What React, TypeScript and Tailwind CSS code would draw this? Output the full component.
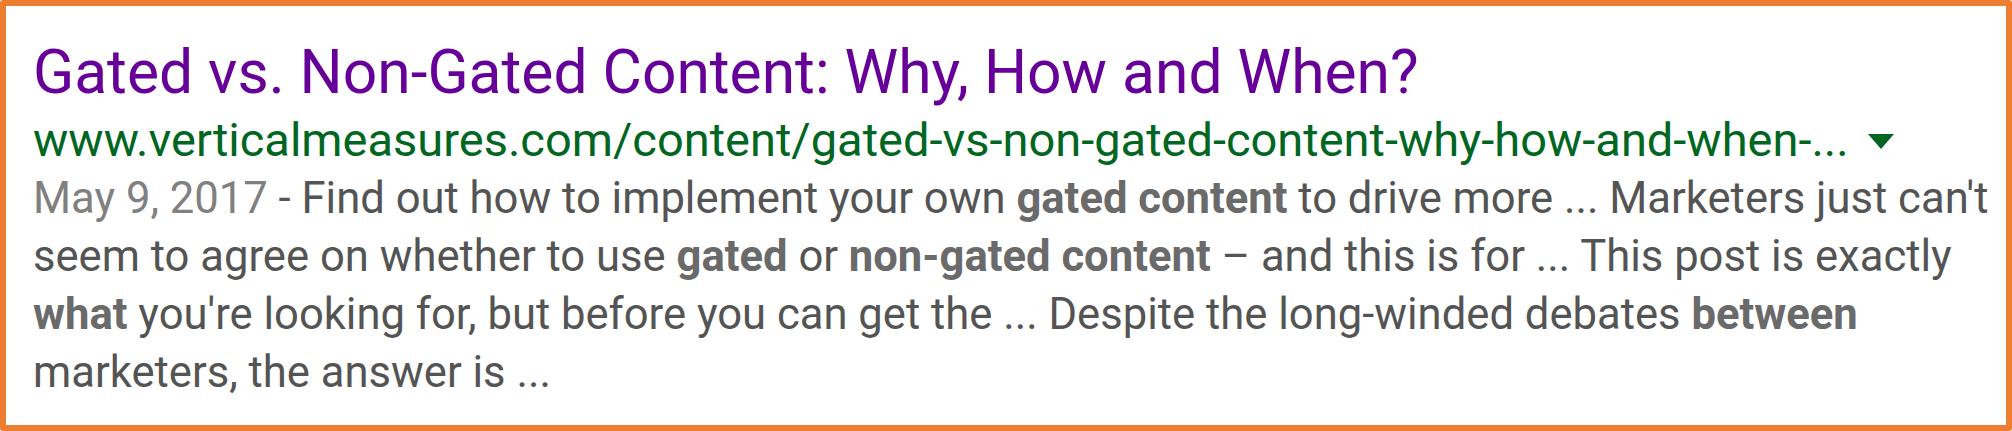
import React from 'react';

const B = ({ children }: { children: React.ReactNode }) => (
    <b className="font-bold text-[#6a6a6a]">{children}</b>
);

export default function App() {
    return (
        <div className="w-[2012px] h-[431px] bg-white border-[6px] border-[#ed7d31] rounded-[3px] pl-[27px] pt-[30px] font-['Roboto',sans-serif] overflow-hidden">
            {/* title */}
            <div className="text-[60.5px] leading-[74px] text-[#660099] whitespace-nowrap">
                Gated vs. Non-Gated Content: Why, How and When?
            </div>

            {/* url row */}
            <div className="flex items-center text-[47px] leading-[60px] text-[#006621] whitespace-nowrap">
                <span>www.verticalmeasures.com/content/gated-vs-non-gated-content-why-how-and-when-...</span>
                <svg className="ml-[19px] mt-[2px]" width="26" height="15" viewBox="0 0 26 15">
                    <path d="M0 0 L26 0 L13 15 Z" fill="#006621" />
                </svg>
            </div>

            {/* snippet */}
            <div className="text-[43.6px] leading-[58px] text-[#545454] whitespace-nowrap">
                <div>
                    <span className="text-[#808080]">May 9, 2017</span> - Find out how to implement your own <B>gated content</B> to drive more ... Marketers just can't
                </div>
                <div>
                    seem to agree on whether to use <B>gated</B> or <B>non-gated content</B> – and this is for ... This post is exactly
                </div>
                <div>
                    <B>what</B> you're looking for, but before you can get the ... Despite the long-winded debates <B>between</B>
                </div>
                <div>marketers, the answer is ...</div>
            </div>
        </div>
    );
}
